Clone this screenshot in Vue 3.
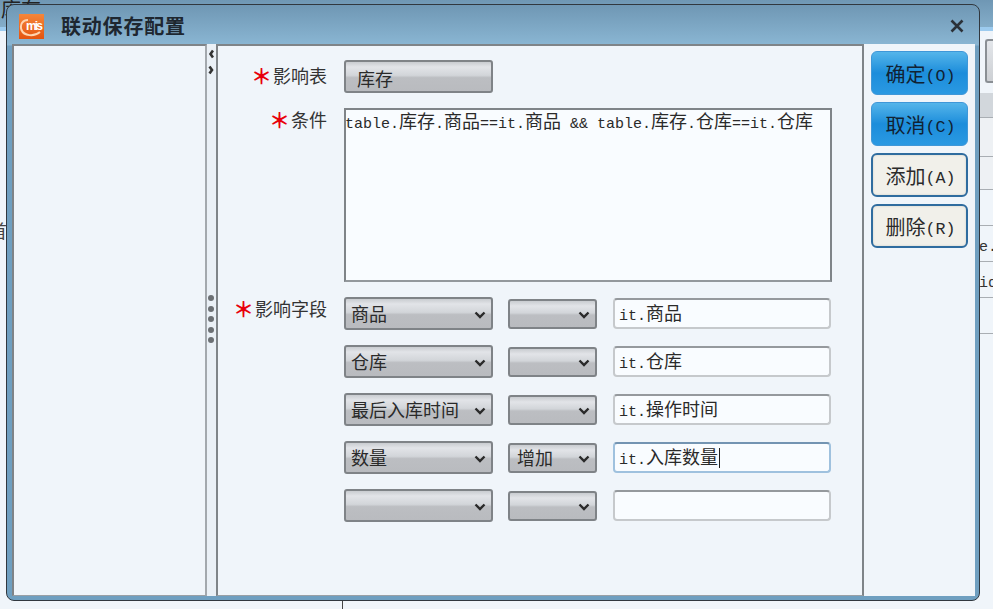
<script setup>
const rows = [
  { a: '商品', b: '', c: '商品' },
  { a: '仓库', b: '', c: '仓库' },
  { a: '最后入库时间', b: '', c: '操作时间' },
  { a: '数量', b: '增加', c: '入库数量', focus: true },
  { a: '', b: '', c: '' }
]
const actions = [
  { t: '确定', k: '(O)', primary: true },
  { t: '取消', k: '(C)', primary: true },
  { t: '添加', k: '(A)' },
  { t: '删除', k: '(R)' }
]
const dots = [1, 2, 3, 4, 5]
</script>

<template>
  <div class="page">
    <div class="bg">
      <div class="bg-top"><span class="bg-clip">库存</span></div>
      <div class="bg-body">
        <div class="bg-left"><span class="bg-char">首</span></div>
        <div class="bg-right">
          <div class="bg-btn"></div>
          <div class="bg-band"></div>
          <div class="bg-row h39"></div>
          <div class="bg-row h33"></div>
          <div class="bg-row h36"></div>
          <div class="bg-row h36"><span class="m">e.</span></div>
          <div class="bg-row h36"><span class="m">id</span></div>
          <div class="bg-row h36"></div>
        </div>
      </div>
      <div class="bg-tick"></div>
    </div>

    <div class="dialog">
      <div class="title">
        <svg class="logo" width="25" height="25" viewBox="0 0 25 25">
          <defs>
            <linearGradient id="lg" x1="0" y1="0" x2="0" y2="1">
              <stop offset="0" stop-color="#f5863a" />
              <stop offset="1" stop-color="#e4540f" />
            </linearGradient>
          </defs>
          <rect width="25" height="25" fill="url(#lg)" />
          <path d="M21 18 C15 23 5 22 2.5 16 C0.5 10 4 6 9 6" fill="none" stroke="#ffd3ad" stroke-width="2" />
          <text x="7" y="16" font-size="12" font-weight="700" textLength="17" fill="#fff" font-family="Liberation Sans, sans-serif">mis</text>
        </svg>
        <span class="title-text">联动保存配置</span>
        <svg class="close" width="16" height="16" viewBox="0 0 16 16">
          <path d="M2.5 2.5 L13.5 13.5 M13.5 2.5 L2.5 13.5" stroke="#2b3138" stroke-width="2.6" fill="none" />
        </svg>
      </div>
      <div class="content">
        <div class="left-panel"></div>
        <div class="splitter">
          <div class="arrows">
            <svg width="6" height="10" viewBox="0 0 6 10"><path d="M5 1.5 L2.5 5 L5 8.5" stroke="#333" stroke-width="2.6" fill="none" /></svg>
            <svg width="6" height="10" viewBox="0 0 6 10"><path d="M1.5 1.5 L4 5 L1.5 8.5" stroke="#333" stroke-width="2.6" fill="none" /></svg>
          </div>
          <div class="dots"><i v-for="d in dots" :key="d"></i></div>
        </div>
        <div class="main">
          <div class="form-row first">
            <div class="label label-first"><b>＊</b>影响表</div>
            <div class="sel btn-like"><span class="btn-text">库存</span></div>
          </div>
          <div class="form-row area-row">
            <div class="label label-area"><b>＊</b>条件</div>
            <div class="area"><span class="m">table.</span>库存<span class="m">.</span>商品<span class="m">==it.</span>商品<span class="m"> &amp;&amp; table.</span>库存<span class="m">.</span>仓库<span class="m">==it.</span>仓库</div>
          </div>
          <div class="fields">
            <div class="label fields-label"><b>＊</b>影响字段</div>
            <div class="field-list">
              <div v-for="(r, i) in rows" :key="i" class="field">
                <div class="sel a">
                  <span class="opt">{{ r.a }}</span>
                  <svg width="12" height="8" viewBox="0 0 12 8"><path d="M1.5 1.5 L6 6 L10.5 1.5" stroke="#2a2a2a" stroke-width="2.4" fill="none" /></svg>
                </div>
                <div class="sel b">
                  <span class="opt">{{ r.b }}</span>
                  <svg width="12" height="8" viewBox="0 0 12 8"><path d="M1.5 1.5 L6 6 L10.5 1.5" stroke="#2a2a2a" stroke-width="2.4" fill="none" /></svg>
                </div>
                <div class="input" :class="{ focus: r.focus }">
                  <template v-if="r.c"><span class="m">it.</span>{{ r.c }}</template>
                  <i v-if="r.focus" class="caret"></i>
                </div>
              </div>
            </div>
          </div>
        </div>
        <div class="side">
          <button v-for="x in actions" :key="x.t" class="action" :class="{ primary: x.primary }">
            {{ x.t }}<span class="mk">{{ x.k }}</span>
          </button>
        </div>
      </div>
    </div>
  </div>
</template>

<style>
html, body { margin: 0; background: #f0f5fa; }
</style>

<style scoped>
.page {
  position: relative;
  width: 993px;
  height: 609px;
  overflow: hidden;
  font-family: "Noto Sans CJK SC", "Liberation Sans", sans-serif;
  font-size: 18px;
  color: #2a2a2a;
  background: #f0f5fa;
}
.m {
  font-family: "Liberation Mono", monospace;
  font-size: 15px;
  white-space: pre;
}
/* background window */
.bg { height: 609px; display: flex; flex-direction: column; }
.bg-top {
  height: 27px;
  flex: none;
  background: linear-gradient(#6f97b4, #84adc9);
  border-bottom: 4px solid #9ccbef;
  overflow: hidden;
}
.bg-clip { display: block; margin: -2px 0 0 1px; font-size: 20px; line-height: 22px; color: #222; white-space: nowrap; }
.bg-body { flex: 1; display: flex; justify-content: space-between; }
.bg-left { width: 6px; overflow: hidden; padding-top: 189px; }
.bg-char { display: block; margin-left: -11px; font-size: 18px; line-height: 20px; color: #444; }
.bg-right { width: 13px; padding: 8px 0 0 0; overflow: hidden; box-sizing: content-box; }
.bg-btn {
  width: 12px;
  height: 44px;
  margin-left: 5px;
  box-sizing: border-box;
  border: 2px solid #8a8f94;
  border-right: 0;
  border-radius: 3px 0 0 3px;
  background: linear-gradient(#e3e6ea, #cdd0d4);
}
.bg-band { height: 24px; margin-top: 10px; background: #d2d7dc; border-bottom: 1px solid #a9aeb3; }
.bg-row {
  box-sizing: border-box;
  border-bottom: 1px solid #a9aeb3;
  overflow: hidden;
  line-height: 35px;
  color: #333;
  white-space: nowrap;
  background: #eef1f4;
}
.bg-row .m { margin-left: -1px; }
.h39 { height: 39px; }
.h33 { height: 33px; }
.h36 { height: 36px; background: #f0f5fa; }
.bg-tick { position: absolute; left: 342px; top: 600px; width: 1px; height: 9px; background: #444; }

/* dialog */
.dialog {
  position: absolute;
  left: 6px;
  top: 4px;
  width: 974px;
  height: 597px;
  box-sizing: border-box;
  display: flex;
  flex-direction: column;
  border: 1px solid #31383f;
  border-radius: 8px;
  background: linear-gradient(#6f97b4, #8ab6d3 40px, #6f9fc0 41px);
  padding: 0 4px 4px 5px;
}
.title {
  height: 39px;
  flex: none;
  display: flex;
  align-items: center;
  position: relative;
}
.logo { margin-left: 7px; margin-top: 3px; }
.title-text {
  margin-left: 17px;
  margin-top: 3px;
  font-size: 20px;
  font-weight: 700;
  letter-spacing: 0.8px;
  line-height: 24px;
  color: #1e2730;
}
.close { margin-left: auto; margin-right: 10px; margin-top: 3px; }
.content {
  flex: 1;
  min-height: 0;
  display: flex;
  background: #f0f5fa;
}
.left-panel {
  width: 195px;
  flex: none;
  box-sizing: border-box;
  border-top: 2px solid #7f8488;
  border-left: 2px solid #7f8488;
  border-right: 2px solid #a3a8ad;
  border-bottom: 1px solid #9aa0a5;
  background: #f0f5fa;
}
.splitter {
  width: 9px;
  flex: none;
  position: relative;
  background: #eaf0f6;
}
.arrows {
  position: absolute;
  left: 1px;
  top: 5px;
  display: flex;
  flex-direction: column;
  gap: 6px;
}
.arrows svg { display: block; }
.dots {
  position: absolute;
  left: 1px;
  top: 251px;
  display: flex;
  flex-direction: column;
  gap: 4.5px;
}
.dots i { display: block; width: 6px; height: 6px; border-radius: 50%; background: #6c7074; }
.main {
  width: 648px;
  flex: none;
  box-sizing: border-box;
  border: 2px solid #7f8488;
  border-bottom: 1px solid #9aa0a5;
  padding: 14px 0 0 0;
  background: #f0f5fa;
}
.form-row { display: flex; }
.label {
  width: 109px;
  flex: none;
  text-align: right;
  line-height: 26px;
  color: #333;
  white-space: nowrap;
}
.label-first { margin-top: 2px; }
.label-area { margin-top: -2px; }
.label b {
  color: #e8000b;
  font-size: 21px;
  font-weight: 700;
  line-height: 20px;
  vertical-align: -1px;
  margin-right: 1px;
}
.sel {
  box-sizing: border-box;
  border: 2px solid #7f8387;
  border-radius: 3px;
  background: linear-gradient(#c9ccd0 0, #e2e4e8 5px, #d2d5d9 46%, #bcbec2 54%, #b9bbbf 100%);
  display: flex;
  align-items: center;
  justify-content: space-between;
  height: 33px;
  color: #2a2a2a;
  line-height: 26px;
  white-space: nowrap;
}
.opt { margin-top: -2px; }
.btn-like {
  width: 149px;
  margin-left: 17px;
  padding-left: 11px;
  justify-content: flex-start;
}
.btn-text { padding-top: 2px; }
.area-row { margin-top: 15px; }
.area {
  width: 488px;
  height: 174px;
  margin-left: 17px;
  box-sizing: border-box;
  border: 2px solid #7f8488;
  border-bottom-color: #93989c;
  background: #f9fcff;
  line-height: 20px;
  text-indent: -1px;
  white-space: nowrap;
  overflow: hidden;
}
.fields { display: flex; margin-top: 15px; }
.fields-label { margin-top: -2px; }
.field-list { margin-left: 17px; display: flex; flex-direction: column; gap: 15px; }
.field { display: flex; align-items: center; height: 33px; }
.a { width: 149px; padding: 0 5px 0 5px; }
.a svg, .b svg { flex: none; margin-top: 2px; }
.b { width: 89px; height: 30px; margin-left: 15px; padding: 0 5px 0 7px; }
.input {
  width: 218px;
  height: 31px;
  margin-left: 16px;
  box-sizing: border-box;
  border: 2px solid #c6c9cc;
  border-top-color: #95999d;
  border-radius: 4px;
  background: #f9fcff;
  padding-left: 4px;
  line-height: 25px;
  white-space: nowrap;
  color: #2a2a2a;
}
.input.focus { border-color: #9fc1de; border-top-color: #7394b2; }
.caret {
  display: inline-block;
  width: 1px;
  height: 20px;
  margin-left: 1px;
  vertical-align: -4px;
  background: #222;
}
.side {
  flex: 1;
  display: flex;
  flex-direction: column;
  gap: 7px;
  padding: 7px 0 0 7px;
}
.action {
  width: 97px;
  height: 44px;
  flex: none;
  box-sizing: border-box;
  padding: 5px 0 0 2px;
  border: 2px solid #2f6c9f;
  border-radius: 6px;
  background: #f1f0ea;
  box-shadow: inset 0 0 2px #c9c8c2;
  font-family: inherit;
  font-size: 20px;
  line-height: 28px;
  color: #2a2a2a;
}
.action.primary {
  border: 1px solid #3f97d8;
  background: linear-gradient(#55b5ea, #1c8ddb 50%, #2a99e2);
  box-shadow: none;
  color: #123;
}
.mk { font-family: "Liberation Mono", monospace; font-size: 16.67px; vertical-align: 1px; }
</style>
